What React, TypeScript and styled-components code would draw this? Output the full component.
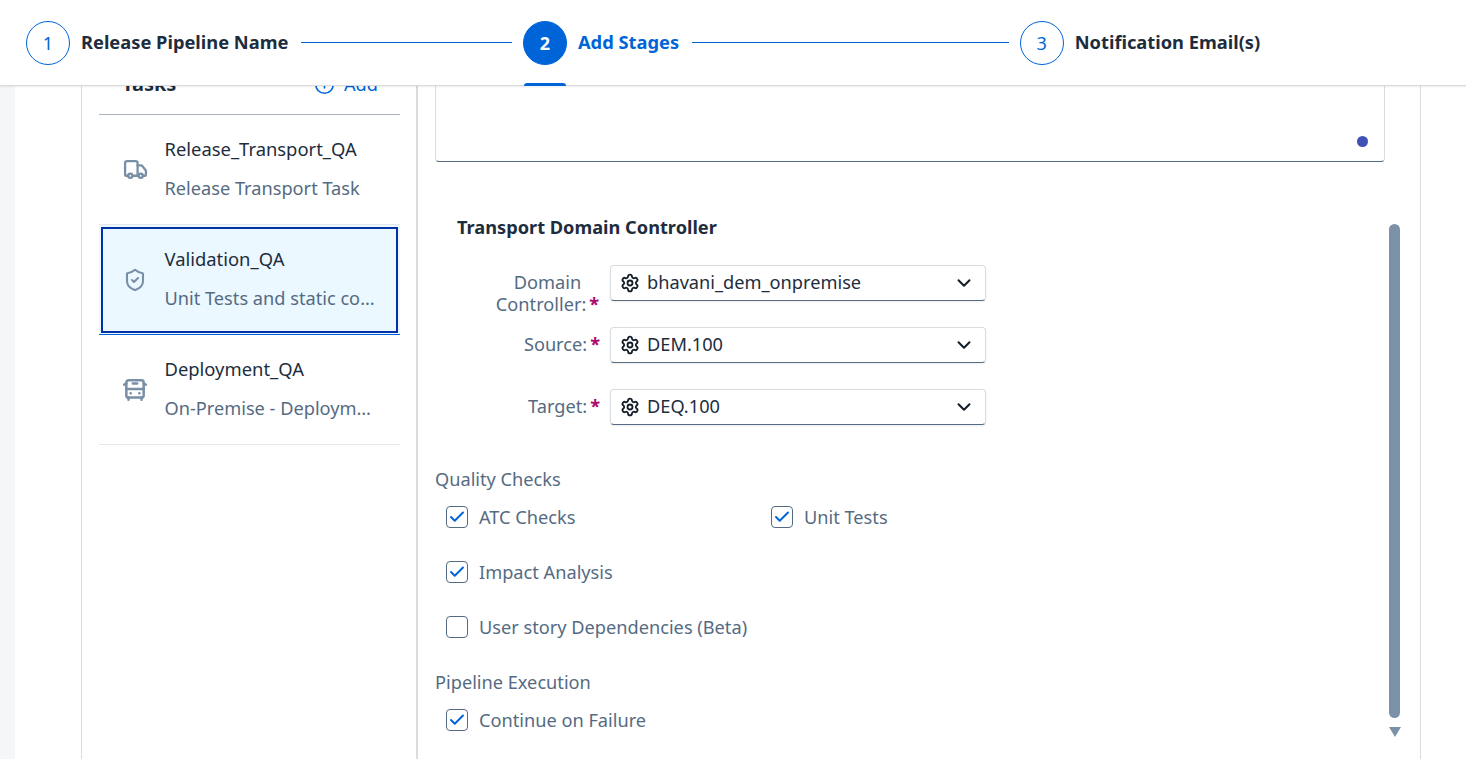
import styled, {createGlobalStyle} from 'styled-components'
import {BusFront, Check, ChevronDown, CirclePlus, Settings, ShieldCheck, Truck} from 'lucide-react'

const GlobalStyle = createGlobalStyle`
  html, body {
    margin: 0;
    padding: 0;
    background: #fff;
  }
  body {
    font-family: "Noto Sans", "Open Sans", "Liberation Sans", sans-serif;
    color: #1d2d3e;
  }
`

const steps = [
  {num: 1, label: 'Release Pipeline Name', lineWidth: 211},
  {num: 2, label: 'Add Stages', lineWidth: 317, active: true},
  {num: 3, label: 'Notification Email(s)'},
]

const tasks = [
  {name: 'Release_Transport_QA', desc: 'Release Transport Task', icon: <Truck size={25} strokeWidth={2.2} />},
  {name: 'Validation_QA', desc: 'Unit Tests and static code checks', icon: <ShieldCheck size={24} strokeWidth={2.1} />, selected: true},
  {name: 'Deployment_QA', desc: 'On-Premise - Deployment Task', icon: <BusFront size={26} strokeWidth={2.3} />},
]

const selects = [
  {label: 'Domain Controller:', value: 'bhavani_dem_onpremise'},
  {label: 'Source:', value: 'DEM.100'},
  {label: 'Target:', value: 'DEQ.100'},
]

const CheckItem = ({label, checked, newRow}: {label: string; checked?: boolean; newRow?: boolean}) => (
  <CheckRow $newRow={newRow}>
    <CheckBox>{checked && <Check size={18} strokeWidth={2.6} />}</CheckBox>
    <CheckLabel>{label}</CheckLabel>
  </CheckRow>
)

export default function App() {
  return (
    <Page>
      <GlobalStyle />
      <Header>
        {steps.map(step => (
          <Step key={step.num}>
            <StepCircle $active={step.active}>{step.num}</StepCircle>
            <StepLabel $active={step.active}>{step.label}</StepLabel>
            {step.active && <ActiveMark />}
            {step.lineWidth && <StepLine $width={step.lineWidth} />}
          </Step>
        ))}
      </Header>
      <Body>
        <Gutter />
        <Panel>
          <Sidebar>
            <TasksHead>
              <TasksTitle>Tasks</TasksTitle>
              <AddButton>
                <CirclePlus size={21} strokeWidth={1.8} />
                Add
              </AddButton>
            </TasksHead>
            {tasks.map(task => (
              <TaskItem key={task.name} $selected={task.selected}>
                <TaskIcon>{task.icon}</TaskIcon>
                <TaskText>
                  <TaskName>{task.name}</TaskName>
                  <TaskDesc>{task.desc}</TaskDesc>
                </TaskText>
              </TaskItem>
            ))}
          </Sidebar>
          <Main>
            <TextArea>
              <Dot />
            </TextArea>
            <SectionTitle>Transport Domain Controller</SectionTitle>
            <Fields>
              {selects.map(field => (
                <FieldRow key={field.label}>
                  <FieldLabel>
                    <span>{field.label}</span>
                  </FieldLabel>
                  <Select>
                    <Settings size={20} strokeWidth={2.2} color="#131e29" />
                    <SelectValue>{field.value}</SelectValue>
                    <ChevronDown size={22} strokeWidth={2.2} color="#131e29" />
                  </Select>
                </FieldRow>
              ))}
            </Fields>
            <GroupLabel>Quality Checks</GroupLabel>
            <CheckGrid>
              <CheckItem label="ATC Checks" checked />
              <CheckItem label="Unit Tests" checked />
              <CheckItem label="Impact Analysis" checked newRow />
              <CheckItem label="User story Dependencies (Beta)" newRow />
            </CheckGrid>
            <GroupLabel $tight>Pipeline Execution</GroupLabel>
            <CheckGrid>
              <CheckItem label="Continue on Failure" checked />
            </CheckGrid>
            <Scrollbar>
              <ScrollThumb />
              <ScrollArrow />
            </Scrollbar>
          </Main>
        </Panel>
      </Body>
    </Page>
  )
}

const Page = styled.div`
  display: flex;
  flex-direction: column;
  height: 100vh;
  overflow: hidden;
`
const Header = styled.header`
  align-items: center;
  background: #fff;
  border-bottom: 1px solid #d9d9d9;
  box-shadow: 0 1px 2px rgba(0, 0, 0, 0.08);
  box-sizing: border-box;
  display: flex;
  flex: 0 0 86px;
  padding: 0 0 0 26px;
  position: relative;
  z-index: 2;
`
const Step = styled.div`
  align-items: center;
  display: flex;
  height: 44px;
  position: relative;
`
const StepCircle = styled.div<{$active?: boolean}>`
  align-items: center;
  background: ${p => (p.$active ? '#0064d9' : '#fff')};
  border: 1px solid #0064d9;
  border-radius: 50%;
  box-sizing: border-box;
  color: ${p => (p.$active ? '#fff' : '#0064d9')};
  display: flex;
  font-size: 18px;
  font-weight: ${p => (p.$active ? 700 : 400)};
  height: 44px;
  justify-content: center;
  width: 44px;
`
const StepLabel = styled.div<{$active?: boolean}>`
  color: ${p => (p.$active ? '#0064d9' : '#1d2d3e')};
  font-size: 18.3px;
  font-weight: 700;
  margin-left: 11px;
  padding-bottom: 2px;
  white-space: nowrap;
`
const StepLine = styled.div<{$width: number}>`
  background: #0064d9;
  height: 1px;
  margin: 0 11px 0 12.6px;
  width: ${p => p.$width}px;
`
const ActiveMark = styled.div`
  background: #0064d9;
  border-radius: 3px 3px 0 0;
  bottom: -21px;
  height: 3px;
  left: 1px;
  position: absolute;
  width: 42px;
`
const Body = styled.div`
  display: flex;
  flex: 1;
  min-height: 0;
  overflow: hidden;
`
const Gutter = styled.div`
  background: #f5f6f7;
  flex: 0 0 15px;
`
const Panel = styled.div`
  border-left: 1px solid #d9dde2;
  border-right: 1px solid #d9dde2;
  display: flex;
  flex: 1;
  margin: 0 45px 0 66px;
  min-width: 0;
`
const Sidebar = styled.aside`
  border-right: 2px solid #d9dde2;
  box-sizing: border-box;
  flex: 0 0 336px;
  margin-top: -31px;
  min-width: 0;
  padding: 0 16px 0 17px;
`
const TasksHead = styled.div`
  align-items: flex-start;
  border-bottom: 1px solid #a8b3bd;
  box-sizing: border-box;
  display: flex;
  height: 60px;
  justify-content: space-between;
  padding: 17px 22px 0 23px;
`
const TasksTitle = styled.div`
  font-size: 20px;
  font-weight: 700;
  line-height: 24px;
`
const AddButton = styled.div`
  align-items: center;
  color: #0064d9;
  display: flex;
  font-size: 18.2px;
  gap: 9px;
  line-height: 24px;
`
const TaskItem = styled.div<{$selected?: boolean}>`
  align-items: center;
  background: ${p => (p.$selected ? '#ebf8ff' : '#fff')};
  border-bottom: 1px solid ${p => (p.$selected ? '#0064d9' : '#e5e7ea')};
  box-sizing: border-box;
  display: flex;
  height: 110px;
  outline: ${p => (p.$selected ? '2px solid #0032a5' : 'none')};
  outline-offset: -4px;
  padding: 0 24px 0 22px;
`
const TaskIcon = styled.div`
  align-items: center;
  color: #788fa6;
  display: flex;
  flex: 0 0 28px;
  justify-content: center;
  margin-right: 15.5px;
`
const TaskText = styled.div`
  display: flex;
  flex: 1;
  flex-direction: column;
  gap: 15px;
  margin-bottom: 2px;
  min-width: 0;
`
const TaskName = styled.div`
  font-size: 18.4px;
  line-height: 24px;
  white-space: nowrap;
`
const TaskDesc = styled.div`
  color: #556b82;
  font-size: 18.2px;
  line-height: 24px;
  overflow: hidden;
  text-overflow: ellipsis;
  white-space: nowrap;
`
const Main = styled.main`
  box-sizing: border-box;
  flex: 1;
  min-width: 0;
  padding: 0 35px 0 17px;
  position: relative;
`
const TextArea = styled.div`
  border: 1px solid #d9dde2;
  border-bottom-color: #556b82;
  border-radius: 4px;
  box-sizing: border-box;
  height: 122px;
  margin-top: -46px;
  position: relative;
`
const Dot = styled.div`
  background: #3f51b5;
  border-radius: 50%;
  bottom: 14px;
  height: 11px;
  position: absolute;
  right: 16px;
  width: 11px;
`
const SectionTitle = styled.div`
  font-size: 18.2px;
  font-weight: 700;
  line-height: 24px;
  margin: 53px 0 0 22px;
`
const Fields = styled.div`
  display: flex;
  flex-direction: column;
  gap: 26px;
  margin-top: 26px;
`
const FieldRow = styled.div`
  display: flex;
  gap: 10px;
  height: 36px;
`
const FieldLabel = styled.label`
  color: #556b82;
  display: flex;
  flex: 0 0 165px;
  font-size: 18.2px;
  justify-content: flex-end;
  line-height: 22px;
  padding-top: 6px;
  text-align: center;

  span {
    max-width: 105px;
  }
  span::after {
    color: #aa0a6e;
    content: '*';
    font-weight: 700;
    margin-left: 3px;
  }
`
const Select = styled.div`
  align-items: center;
  border: 1px solid #d9dde2;
  border-bottom-color: #556b82;
  border-radius: 4px;
  box-shadow: 0 1px 2px rgba(0, 0, 0, 0.08);
  box-sizing: border-box;
  display: flex;
  gap: 7px;
  height: 36px;
  padding: 0 10px 0 9px;
  width: 376px;
`
const SelectValue = styled.span`
  flex: 1;
  font-size: 18.2px;
  line-height: 32px;
  padding-bottom: 2px;
`
const GroupLabel = styled.div<{$tight?: boolean}>`
  color: #556b82;
  font-size: 18.2px;
  line-height: 24px;
  margin-top: ${p => (p.$tight ? 31 : 42)}px;
`
const CheckGrid = styled.div`
  display: grid;
  grid-template-columns: 325px 1fr;
  margin-top: 14px;
  padding-left: 11px;
  row-gap: 31px;
`
const CheckRow = styled.div<{$newRow?: boolean}>`
  align-items: center;
  color: #556b82;
  display: flex;
  font-size: 18.2px;
  gap: 11px;
  grid-column: ${p => (p.$newRow ? 1 : 'auto')};
  height: 24px;
  white-space: nowrap;
`
const CheckLabel = styled.span`
  line-height: 24px;
`
const CheckBox = styled.div`
  align-items: center;
  border: 1px solid #556b82;
  border-radius: 4px;
  box-sizing: border-box;
  color: #0064d9;
  display: flex;
  flex: 0 0 22px;
  height: 22px;
  justify-content: center;
`
const Scrollbar = styled.div`
  align-items: center;
  bottom: 22px;
  display: flex;
  flex-direction: column;
  gap: 9px;
  position: absolute;
  right: 19px;
  top: 138px;
  width: 13px;
`
const ScrollThumb = styled.div`
  background: #7b91a8;
  border-radius: 6px;
  height: 494px;
  width: 11px;
`
const ScrollArrow = styled.div`
  border-left: 6.5px solid transparent;
  border-right: 6.5px solid transparent;
  border-top: 10px solid #7b91a8;
  height: 0;
  width: 0;
`
